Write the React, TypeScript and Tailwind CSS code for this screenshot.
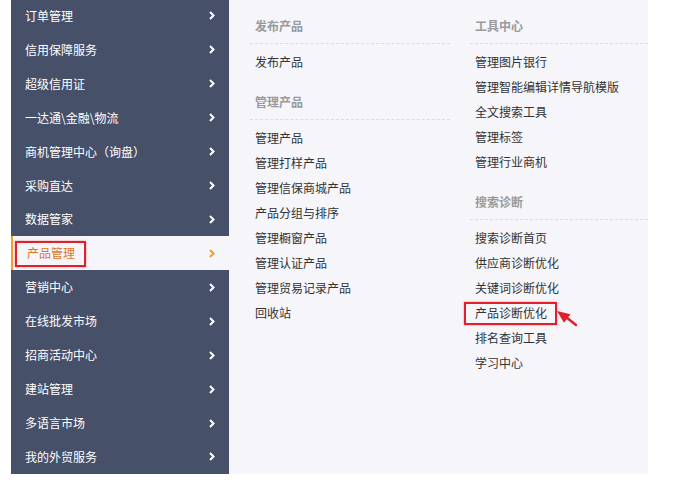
import React from "react";

const sideItems = [
  "订单管理",
  "信用保障服务",
  "超级信用证",
  "一达通\\金融\\物流",
  "商机管理中心（询盘）",
  "采购直达",
  "数据管家",
  "产品管理",
  "营销中心",
  "在线批发市场",
  "招商活动中心",
  "建站管理",
  "多语言市场",
  "我的外贸服务",
];

function Chevron({ color }: { color: string }) {
  return (
    <svg width="6" height="9" viewBox="0 0 6 9" className="shrink-0">
      <polyline points="1,1 4.5,4.5 1,8" fill="none" stroke={color} strokeWidth="2" />
    </svg>
  );
}

function Section({
  title,
  items,
  first,
  mark,
}: {
  title: string;
  items: string[];
  first?: boolean;
  mark?: string;
}) {
  return (
    <div>
      <div
        className={`${first ? "pt-[14px]" : "pt-[15px]"} pb-[5px] pl-[5px] leading-[25px] h-auto border-b border-dashed border-[#dcdce2] font-bold text-[#9a9a9a]`}
      >
        {title}
      </div>
      <div className="pt-[5px] pl-[5px]">
        {items.map((it) => (
          <div key={it} className="relative h-[25px] leading-[25px] text-[#333]">
            {it}
            {mark === it && (
              <>
                <span className="absolute left-[-11px] top-[2px] w-[93px] h-[23px] border-2 border-[#e0202a] shadow-[0_0_2px_rgba(224,32,42,0.5)]" />
                <svg
                  width="30"
                  height="26"
                  viewBox="0 0 30 26"
                  className="absolute left-[75px] top-[3px] pointer-events-none"
                >
                  <line x1="16" y1="14" x2="26" y2="22" stroke="#e0202a" strokeWidth="2.5" strokeLinecap="round" />
                  <polygon points="7,8 20.5,11.2 14,19.7" fill="#e0202a" />
                </svg>
              </>
            )}
          </div>
        ))}
      </div>
    </div>
  );
}

export default function App() {
  return (
    <div
      className="relative w-[697px] h-[489px] bg-white overflow-hidden text-[12px]"
      style={{ fontFamily: '"Noto Sans CJK SC", "Noto Sans", sans-serif' }}
    >
      <div className="flex mt-[-1px] ml-[11px] h-[475px]">
        <div className="w-[218px] bg-[#465069] flex flex-col">
          {sideItems.map((it) => {
            const active = it === "产品管理";
            return (
              <div
                key={it}
                className={`relative h-[34px] flex items-center justify-between pl-[14px] pr-[14px] ${
                  active ? "bg-[#f5f5fa] text-[#e0741c] border-l-2 border-[#f0a030] pl-[12px]" : "text-white"
                }`}
              >
                <span>{it}</span>
                <Chevron color={active ? "#f0a020" : "#ffffff"} />
                {active && (
                  <span className="absolute left-[2px] top-[5px] w-[71px] h-[26px] border-2 border-[#e0202a] shadow-[0_0_2px_rgba(224,32,42,0.5)]" />
                )}
              </div>
            );
          })}
        </div>
        <div className="w-[419px] bg-[#f5f5fa] flex pl-[21px] gap-[20px]">
          <div className="w-[200px]">
            <Section title="发布产品" items={["发布产品"]} first />
            <Section
              title="管理产品"
              items={[
                "管理产品",
                "管理打样产品",
                "管理信保商城产品",
                "产品分组与排序",
                "管理橱窗产品",
                "管理认证产品",
                "管理贸易记录产品",
                "回收站",
              ]}
            />
          </div>
          <div className="flex-1">
            <Section
              title="工具中心"
              items={["管理图片银行", "管理智能编辑详情导航模版", "全文搜索工具", "管理标签", "管理行业商机"]}
              first
            />
            <Section
              title="搜索诊断"
              items={["搜索诊断首页", "供应商诊断优化", "关键词诊断优化", "产品诊断优化", "排名查询工具", "学习中心"]}
              mark="产品诊断优化"
            />
          </div>
        </div>
      </div>
    </div>
  );
}
